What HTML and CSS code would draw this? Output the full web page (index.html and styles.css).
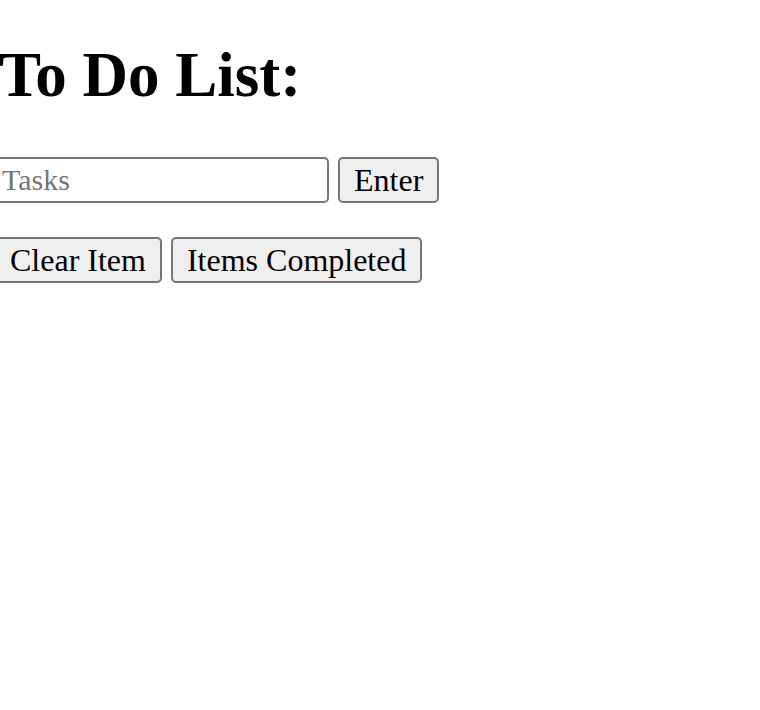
FILE: index.html
```html
<!DOCTYPE html>
<html>
<head>
<meta charset="utf-8">
<title>To Do List</title>
<link rel="stylesheet" href="styles.css">
</head>
<body>
<main class="page">
  <h1 class="title">To Do List:</h1>
  <div class="row row-entry">
    <input class="task-input" type="text" placeholder="Tasks">
    <button class="btn">Enter</button>
  </div>
  <div class="row row-actions">
    <button class="btn">Clear Item</button>
    <button class="btn">Items Completed</button>
  </div>
</main>
</body>
</html>
```
FILE: styles.css
```css
html, body {
  margin: 0;
  padding: 0;
  background: #ffffff;
}

.page {
  margin-left: -6px;
  padding-top: 38px;
  font-family: "Liberation Serif", "Times New Roman", serif;
  color: #000;
}

.title {
  margin: 0 0 0 5px;
  font-size: 63px;
  line-height: 74px;
  font-weight: bold;
}

.row {
  display: flex;
  gap: 9px;
  align-items: stretch;
}

.row-entry {
  margin-top: 45px;
}

.row-actions {
  margin-top: 34px;
}

.task-input {
  box-sizing: border-box;
  width: 335px;
  height: 46px;
  padding: 2px 6px;
  border: 2px solid #767676;
  border-radius: 5px;
  font-family: "Liberation Serif", "Times New Roman", serif;
  font-size: 30px;
  color: #000;
  background: #fff;
  outline: none;
}

.task-input::placeholder {
  color: #757575;
}

.btn {
  box-sizing: border-box;
  height: 46px;
  padding: 0 14px;
  border: 2px solid #767676;
  border-radius: 5px;
  background: #efefef;
  font-family: "Liberation Serif", "Times New Roman", serif;
  font-size: 32px;
  line-height: 40px;
  color: #000;
}
```
